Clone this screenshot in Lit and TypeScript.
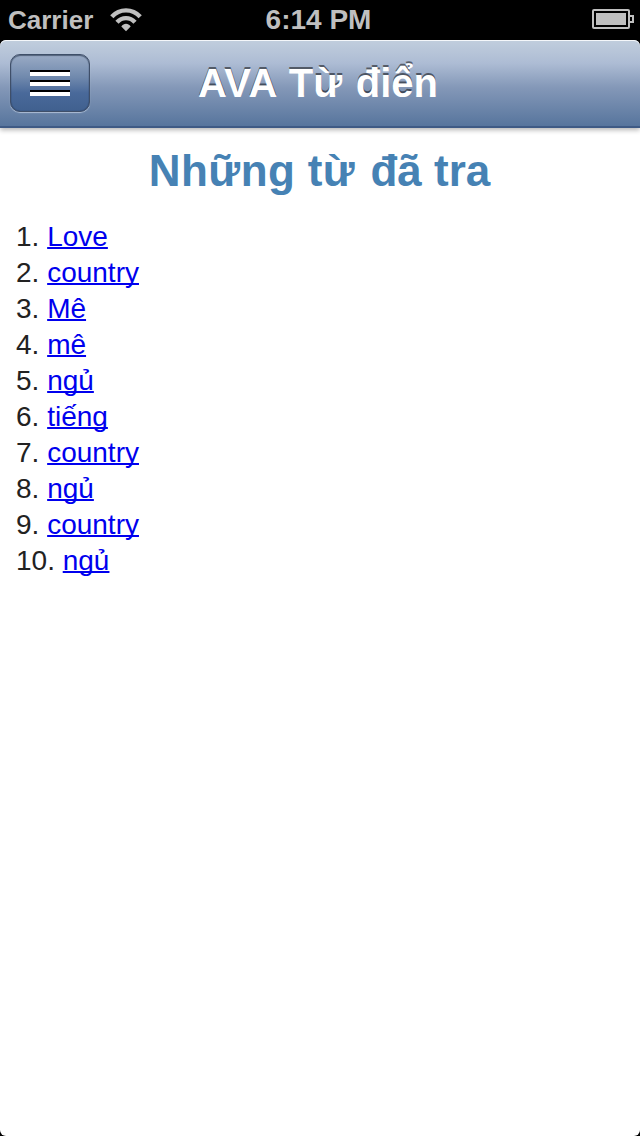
import { LitElement, html, css } from "lit";
import { customElement } from "lit/decorators.js";

@customElement("status-bar")
class StatusBar extends LitElement {
  static styles = css`
    :host {
      display: grid;
      grid-template-columns: 1fr auto 1fr;
      align-items: center;
      height: 40px;
      box-sizing: border-box;
      padding: 0 6px 0 8px;
      background: #000;
      color: #bfbfbf;
      font-weight: bold;
      line-height: 40px;
    }
    .left {
      display: flex;
      align-items: center;
      gap: 17px;
      font-size: 26px;
    }
    .time {
      margin-right: 5px;
      font-size: 28px;
    }
    .right {
      display: flex;
      justify-content: flex-end;
    }
    svg {
      display: block;
    }
  `;

  render() {
    return html`
      <div class="left">
        <span>Carrier</span>
        <svg width="32" height="24" viewBox="0 0 32 24" fill="none" stroke="#bfbfbf" stroke-width="4.4">
          <path d="M1.8 8.7C9.6 .3 22.4 .3 30.2 8.7" />
          <path d="M7 14.2C12 8.8 20 8.8 25 14.2" />
          <path d="M11.3 18.4C13.8 15 18.2 15 20.7 18.4L16 23.2Z" fill="#bfbfbf" stroke="none" />
        </svg>
      </div>
      <span class="time">6:14 PM</span>
      <div class="right">
        <svg width="42" height="22" viewBox="0 0 42 22">
          <rect x="1" y="1" width="36" height="18" rx="1" fill="none" stroke="#bfbfbf" stroke-width="2" />
          <rect x="4" y="4" width="30" height="12" fill="#bfbfbf" />
          <path d="M38 7h3v6h-3" fill="none" stroke="#bfbfbf" stroke-width="2" />
        </svg>
      </div>
    `;
  }
}

@customElement("nav-bar")
class NavBar extends LitElement {
  static styles = css`
    :host {
      display: block;
      background: #000;
    }
    .bar {
      display: grid;
      grid-template-columns: 80px 1fr 80px;
      align-items: center;
      height: 88px;
      box-sizing: border-box;
      padding: 0 14px 0 10px;
      border-bottom: 2px solid #3e5a85;
      border-radius: 6px 6px 0 0;
      background: linear-gradient(#c1cedd, #adbcd4 27%, #8498b8 55%, #57759d);
      box-shadow: inset 0 1px 0 #f4f7fa, 0 2px 5px rgba(0, 0, 0, 0.3);
    }
    .menu {
      display: flex;
      flex-direction: column;
      align-items: center;
      justify-content: center;
      gap: 4px;
      width: 80px;
      height: 58px;
      padding: 0;
      box-sizing: border-box;
      border: 1px solid #3f4f69;
      border-radius: 10px;
      background: linear-gradient(#9aabc5, #7089ad 40%, #49699a 68%, #40608f);
      box-shadow: inset 0 1px 1px rgba(20, 35, 60, 0.5), inset 0 0 1px rgba(20, 35, 60, 0.6),
        0 1px 1px rgba(220, 230, 245, 0.6);
    }
    .line {
      width: 40px;
      height: 4px;
      border-top: 2px solid #000;
      background: #fff;
    }
    .title {
      margin: 0;
      color: #fff;
      text-align: center;
      font-size: 40px;
      line-height: 48px;
      font-kerning: none;
      white-space: nowrap;
      text-shadow: 0 -2px 0 rgba(0, 0, 0, 0.5);
    }
    .kerned {
      font-kerning: normal;
      letter-spacing: 0.4px;
    }
    .wide {
      margin-right: 2.5px;
    }
  `;

  render() {
    return html`
      <header class="bar">
        <button class="menu" aria-label="Menu">
          <span class="line"></span><span class="line"></span><span class="line"></span>
        </button>
        <h1 class="title"><span class="kerned">AVA</span> <span class="wide">Từ</span> điển</h1>
      </header>
    `;
  }
}

@customElement("app-root")
class AppRoot extends LitElement {
  private words = ["Love", "country", "Mê", "mê", "ngủ", "tiếng", "country", "ngủ", "country", "ngủ"];

  static styles = css`
    :host {
      display: block;
      background: #000;
      font-family: "Liberation Sans", Arial, sans-serif;
    }
    .screen {
      display: flex;
      flex-direction: column;
      height: 1136px;
      overflow: hidden;
    }
    nav-bar {
      position: relative;
    }
    .content {
      flex: 1;
      background: #fff;
      border-radius: 0 0 6px 6px;
    }
    .heading {
      margin: 18px 0 0;
      padding-right: 1px;
      text-align: center;
      color: #4682b4;
      font-size: 44px;
      line-height: 50px;
      font-kerning: none;
    }
    .loose {
      letter-spacing: 0.5px;
    }
    .gap {
      margin-right: 3px;
    }
    .list {
      padding: 23px 16px;
      color: #222;
      font-size: 28px;
      line-height: 36px;
    }
    a {
      color: #0000ee;
      text-decoration: underline;
      text-decoration-thickness: 2px;
      text-underline-offset: 1px;
      text-decoration-skip-ink: none;
    }
  `;

  render() {
    return html`
      <div class="screen">
        <status-bar></status-bar>
        <nav-bar></nav-bar>
        <main class="content">
          <h2 class="heading"><span class="loose">Những</span> <span class="loose gap">từ</span> đã tra</h2>
          <div class="list">
            ${this.words.map((word, i) => html`<div>${i + 1}. <a href="#">${word}</a></div>`)}
          </div>
        </main>
      </div>
    `;
  }
}
